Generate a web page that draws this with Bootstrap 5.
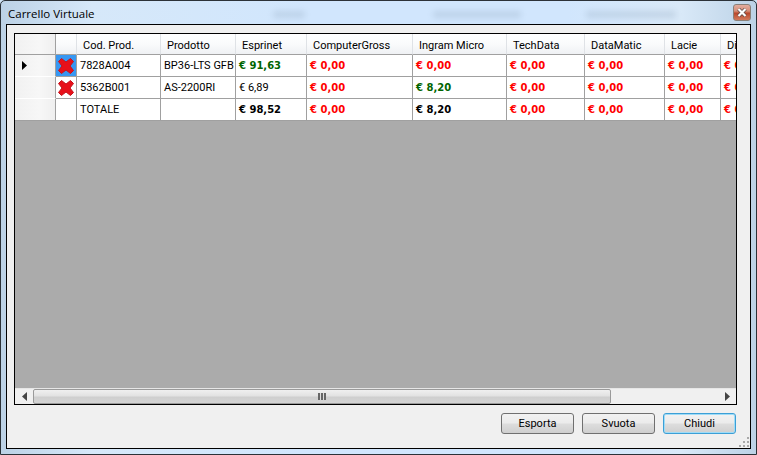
<!DOCTYPE html>
<html lang="en">
<head>
    <meta charset="UTF-8">
    <meta name="viewport" content="width=device-width, initial-scale=1.0">
    <title>Carrello Virtuale</title>
    <link href="https://cdn.jsdelivr.net/npm/bootstrap@5.3.0/dist/css/bootstrap.min.css" rel="stylesheet">
    <style>
        html, body {
            height: 100%;
            margin: 0;
            overflow: hidden;
            background: #cfe3f5;
        }
        .win-frame {
            width: 757px;
            height: 455px;
            border: 1px solid #2c3238;
            border-radius: 5px 5px 0 0;
            background: linear-gradient(90deg, #bcd2e6 0%, #d6e8f9 12%, #d1e6fd 40%, #d1e6fd 75%, #d9e9f8 90%, #bcd2e6 100%);
            padding: 0 5px 6px 5px;
        }
        .win-title {
            height: 23px;
            font: 11.5px "Open Sans", "Liberation Sans", sans-serif;
            color: #000;
            padding-left: 2px;
            padding-top: 5px;
        }
        .title-smudge {
            position: absolute;
            top: 10px;
            height: 7px;
            background: #8da3ba;
            opacity: .3;
            filter: blur(3px);
        }
        .win-close {
            width: 18px;
            height: 17px;
            border: 1px solid #8a8078;
            border-radius: 3px;
            background: linear-gradient(180deg, #e3ad9f 0%, #d68e78 40%, #b9482c 55%, #d27a5c 100%);
            margin-top: -2px;
        }
        .win-client {
            height: 425px;
            border: 1px solid #000;
            background: #f0f0f0;
            padding: 8px 13px 0 7px;
        }
        .grid-box {
            height: 372px;
            border: 1px solid #000;
            background: #ababab;
            overflow: hidden;
        }
        .grid-view {
            height: 354px;
            overflow: hidden;
        }
        .cart-grid {
            table-layout: fixed;
            width: 740px;
            border-collapse: separate;
            border-spacing: 0;
            font: 11px Roboto, "Liberation Sans", sans-serif;
            color: #000;
        }
        .cart-grid th, .cart-grid td {
            height: 22px;
            padding: 0 0 0 3px;
            white-space: nowrap;
            overflow: hidden;
            background: #fff;
            border-right: 1px solid #a0a0a0;
            border-bottom: 1px solid #a0a0a0;
            font-weight: 400;
        }
        .cart-grid th {
            height: 21px;
            padding: 2px 0 0 6px;
            background: linear-gradient(180deg, #fff 0%, #fafbfc 50%, #eff1f4 100%);
            border-right-color: #dfe2e6;
        }
        .cart-grid .row-head {
            background: linear-gradient(90deg, #f1f1f1 0%, #f7f7f7 60%, #efefef 100%);
            padding: 0;
            border-right-color: #a0a0a0;
        }
        .cart-grid td.row-head {
            border-bottom-color: #fff;
        }
        .cart-grid tr:last-child td.row-head {
            border-bottom-color: #a0a0a0;
        }
        .cart-grid .pick-cell { padding: 0; text-align: center; }
        .cart-grid .pick-on { background: #3797f2; }
        .row-arrow {
            display: block;
            width: 5px;
            height: 9px;
            margin-left: 7px;
            background: #000;
            clip-path: polygon(0 0, 100% 50%, 0 100%);
        }
        .x-icon { display: block; margin: 0 auto; }
        .cart-grid .val-good, .cart-grid .val-zero, .cart-grid .val-sum {
            font: 700 10px "DejaVu Sans", sans-serif;
        }
        .cart-grid .val-good { color: #006400; }
        .cart-grid .val-zero { color: #f00; }
        .h-scroll {
            height: 16px;
            background: #f0f0f0;
            border-top: 1px solid #e6e6e6;
        }
        .h-arrow { width: 18px; flex: none; }
        .h-thumb {
            width: 578px;
            height: 15px;
            border: 1px solid #9a9a9a;
            border-radius: 2px;
            background: linear-gradient(180deg, #f0f0f0 0%, #e2e2e2 45%, #cfcfcf 55%, #d4d4d4 100%);
        }
        .thumb-grip {
            width: 8px;
            height: 7px;
            background: repeating-linear-gradient(90deg, #666 0, #666 2px, #ddd 2px, #ddd 3px);
        }
        .win-btn.btn {
            width: 73px;
            height: 21px;
            padding: 0;
            border: 1px solid #707070;
            border-radius: 3px;
            font: 11px Roboto, "Liberation Sans", sans-serif;
            color: #000;
            background: linear-gradient(180deg, #f2f2f2 0%, #ebebeb 48%, #dddddd 52%, #cfcfcf 100%);
        }
        .win-btn.btn-focus {
            border-color: #3c9fd6;
            box-shadow: inset 0 0 0 1px #9fdcf7;
        }
        .btn-row { padding: 8px 1px 0 0; gap: 8px; }
        .size-grip {
            position: absolute;
            right: 1px;
            bottom: 1px;
            width: 10px;
            height: 10px;
        }
    </style>
</head>
<body>
    <div class="win-frame position-relative">
        <i class="title-smudge" style="left:272px;width:32px"></i>
        <i class="title-smudge" style="left:432px;width:88px"></i>
        <i class="title-smudge" style="left:585px;width:90px"></i>
        <div class="win-title d-flex justify-content-between align-items-start">
            <span>Carrello Virtuale</span>
            <div class="win-close d-flex align-items-center justify-content-center">
                <svg width="10" height="9" viewBox="0 0 10 9"><path d="M1.5 1 L8.5 8 M8.5 1 L1.5 8" stroke="#5b4a48" stroke-width="3.6"/><path d="M1.5 1 L8.5 8 M8.5 1 L1.5 8" stroke="#fff" stroke-width="2.2"/></svg>
            </div>
        </div>
        <div class="win-client position-relative">
            <div class="grid-box">
                <div class="grid-view">
                    <table class="cart-grid">
                        <colgroup>
                            <col style="width:41px"><col style="width:21px"><col style="width:84px"><col style="width:75px"><col style="width:71px"><col style="width:106px"><col style="width:94px"><col style="width:78px"><col style="width:80px"><col style="width:56px"><col style="width:60px">
                        </colgroup>
                        <thead>
                            <tr><th class="row-head"></th><th></th><th>Cod. Prod.</th><th>Prodotto</th><th>Esprinet</th><th>ComputerGross</th><th>Ingram Micro</th><th>TechData</th><th>DataMatic</th><th>Lacie</th><th>Di</th></tr>
                        </thead>
                        <tbody>
                            <tr>
                                <td class="row-head"><span class="row-arrow"></span></td>
                                <td class="pick-cell pick-on"><svg class="x-icon" width="18" height="18" viewBox="0 0 18 18"><path d="M4.5 1.5 L9 5 L13.5 1.5 L16.5 4.5 L13 9 L16.5 13.5 L13.5 16.5 L9 13 L4.5 16.5 L1.5 13.5 L5 9 L1.5 4.5 Z" fill="#e8101a" stroke="#c4141c" stroke-width="1" stroke-linejoin="round"/></svg></td>
                                <td>7828A004</td><td>BP36-LTS GFB</td><td class="val-good">€ 91,63</td><td class="val-zero">€ 0,00</td><td class="val-zero">€ 0,00</td><td class="val-zero">€ 0,00</td><td class="val-zero">€ 0,00</td><td class="val-zero">€ 0,00</td><td class="val-zero">€ 0,00</td>
                            </tr>
                            <tr>
                                <td class="row-head"></td>
                                <td class="pick-cell"><svg class="x-icon" width="18" height="18" viewBox="0 0 18 18"><path d="M4.5 1.5 L9 5 L13.5 1.5 L16.5 4.5 L13 9 L16.5 13.5 L13.5 16.5 L9 13 L4.5 16.5 L1.5 13.5 L5 9 L1.5 4.5 Z" fill="#e8101a" stroke="#c4141c" stroke-width="1" stroke-linejoin="round"/></svg></td>
                                <td>5362B001</td><td>AS-2200RI</td><td>€ 6,89</td><td class="val-zero">€ 0,00</td><td class="val-good">€ 8,20</td><td class="val-zero">€ 0,00</td><td class="val-zero">€ 0,00</td><td class="val-zero">€ 0,00</td><td class="val-zero">€ 0,00</td>
                            </tr>
                            <tr>
                                <td class="row-head"></td>
                                <td class="pick-cell"></td>
                                <td>TOTALE</td><td></td><td class="val-sum">€ 98,52</td><td class="val-zero">€ 0,00</td><td class="val-sum">€ 8,20</td><td class="val-zero">€ 0,00</td><td class="val-zero">€ 0,00</td><td class="val-zero">€ 0,00</td><td class="val-zero">€ 0,00</td>
                            </tr>
                        </tbody>
                    </table>
                </div>
                <div class="h-scroll d-flex align-items-center">
                    <div class="h-arrow d-flex justify-content-center"><svg width="5" height="9" viewBox="0 0 5 9"><path d="M5 0 L0 4.5 L5 9 Z" fill="#444"/></svg></div>
                    <div class="h-thumb d-flex align-items-center justify-content-center"><span class="thumb-grip"></span></div>
                    <div class="flex-grow-1"></div>
                    <div class="h-arrow d-flex justify-content-center"><svg width="5" height="9" viewBox="0 0 5 9"><path d="M0 0 L5 4.5 L0 9 Z" fill="#444"/></svg></div>
                </div>
            </div>
            <div class="btn-row d-flex justify-content-end">
                <button type="button" class="btn win-btn">Esporta</button>
                <button type="button" class="btn win-btn">Svuota</button>
                <button type="button" class="btn win-btn btn-focus">Chiudi</button>
            </div>
            <svg class="size-grip" viewBox="0 0 10 10"><g fill="#a9a9a9"><rect x="8" y="8" width="2" height="2"/><rect x="4" y="8" width="2" height="2"/><rect x="0" y="8" width="2" height="2"/><rect x="8" y="4" width="2" height="2"/><rect x="4" y="4" width="2" height="2"/><rect x="8" y="0" width="2" height="2"/></g></svg>
        </div>
    </div>
    <script src="https://cdn.jsdelivr.net/npm/bootstrap@5.3.0/dist/js/bootstrap.bundle.min.js"></script>
</body>
</html>
